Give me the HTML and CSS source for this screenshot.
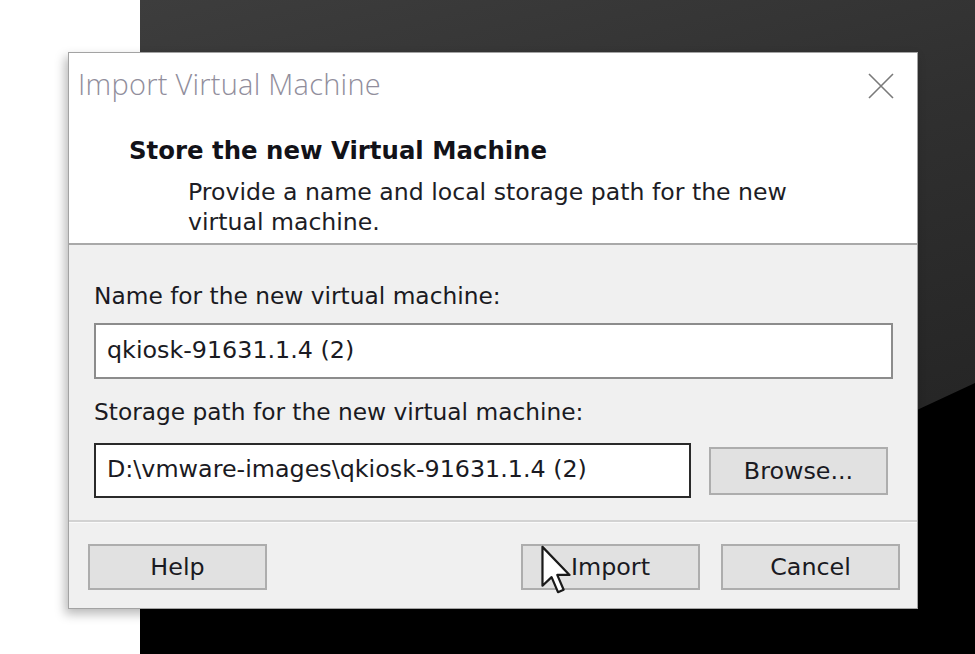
FILE: index.html
```html
<!DOCTYPE html>
<html lang="en">
<head>
<meta charset="utf-8">
<title>Import Virtual Machine</title>
<link rel="stylesheet" href="styles.css">
</head>
<body>
<div class="desk">
  <div class="backdrop"></div>
  <div class="dialog">
    <div class="titlebar">
      <span class="title">Import Virtual Machine</span>
      <svg class="close" width="28" height="28" viewBox="0 0 28 28" aria-hidden="true">
        <path d="M2 2 L26 26 M26 2 L2 26" stroke="#7a7a7a" stroke-width="1.6" fill="none"/>
      </svg>
    </div>
    <div class="header">
      <div class="heading">Store the new Virtual Machine</div>
      <div class="desc">Provide a name and local storage path for the new<br>virtual machine.</div>
    </div>
    <div class="body">
      <div class="label">Name for the new virtual machine:</div>
      <div class="field field-name">qkiosk-91631.1.4 (2)</div>
      <div class="label label-path">Storage path for the new virtual machine:</div>
      <div class="path-row">
        <div class="field field-path">D:\vmware-images\qkiosk-91631.1.4 (2)</div>
        <div class="btn btn-browse">Browse...</div>
      </div>
    </div>
    <div class="footer">
      <div class="btn">Help</div>
      <div class="spacer"></div>
      <div class="btn">Import</div>
      <div class="btn">Cancel</div>
    </div>
    <svg class="cursor" width="32" height="50" viewBox="0 0 13 20" aria-hidden="true">
      <path d="M0.6 0.6 L0.6 16.4 L4.3 12.9 L6.9 19 L9.2 18 L6.6 12 L11.6 12 Z" fill="#fff" stroke="#1a1a1a" stroke-width="0.9" stroke-linejoin="round"/>
    </svg>
  </div>
</div>
</body>
</html>
```

FILE: styles.css
```css
* { box-sizing: border-box; }
html, body { margin: 0; padding: 0; }
body {
  width: 975px;
  height: 654px;
  overflow: hidden;
  background: #ffffff;
  font-family: "DejaVu Sans", "Liberation Sans", sans-serif;
  color: #1a1a22;
}
.desk {
  position: relative;
  width: 975px;
  height: 654px;
}
.backdrop {
  position: relative;
  margin-left: 140px;
  height: 654px;
  background: linear-gradient(165deg, #3d3d3d 0%, #303030 35%, #262626 70%);
}
.backdrop::after {
  content: "";
  position: absolute;
  inset: 0;
  background: #000;
  clip-path: polygon(0 600px, 777px 410px, 835px 383px, 835px 654px, 0 654px);
}
.dialog {
  position: absolute;
  left: 68px;
  top: 52px;
  width: 850px;
  height: 557px;
  border: 1px solid #a3a3a3;
  background: #f0f0f0;
  box-shadow: -3px 5px 10px rgba(0, 0, 0, 0.28);
  display: flex;
  flex-direction: column;
}
.titlebar {
  background: #fff;
  height: 66px;
  display: flex;
  align-items: flex-start;
  justify-content: space-between;
  padding: 14px 22px 0 9px;
}
.title {
  font-family: "Open Sans", "Noto Sans", sans-serif;
  font-weight: 300;
  font-size: 29px;
  line-height: 34px;
  letter-spacing: 0.25px;
  color: #918e9c;
}
.close {
  margin-top: 5px;
}
.header {
  background: #fff;
  height: 126px;
  padding: 18px 0 0 60px;
  border-bottom: 2px solid #a9a9a9;
}
.heading {
  font-weight: bold;
  font-size: 24.4px;
  line-height: 28px;
  color: #121218;
}
.desc {
  margin: 12px 0 0 59px;
  font-size: 23.6px;
  line-height: 30px;
  color: #1d1d25;
}
.body {
  padding: 38px 24px 0 25px;
  height: 277px;
  border-bottom: 2px solid #d2d2d2;
}
.label {
  font-size: 23.3px;
  line-height: 26px;
}
.label-path {
  margin-top: 20px;
}
.field {
  background: #fff;
  font-size: 23.8px;
  line-height: 26px;
  padding: 0 11px 3px;
  display: flex;
  align-items: center;
}
.field-name {
  margin-top: 14px;
  height: 56px;
  border: 2px solid #8c8c8c;
}
.path-row {
  margin-top: 18px;
  display: flex;
  align-items: center;
  gap: 18px;
}
.field-path {
  width: 597px;
  height: 55px;
  border: 2px solid #2a2a2a;
}
.btn {
  width: 179px;
  height: 46px;
  background: #e1e1e1;
  border: 2px solid #adadad;
  font-size: 23.8px;
  line-height: 26px;
  display: flex;
  align-items: center;
  justify-content: center;
}
.btn-browse {
  height: 48px;
}
.footer {
  flex: 1;
  display: flex;
  align-items: flex-start;
  padding: 21px 17px 0 19px;
  gap: 21px;
  border-top: 1px solid #fafafa;
}
.spacer { flex: 1; }
.cursor {
  position: absolute;
  left: 472px;
  top: 492px;
}
```
